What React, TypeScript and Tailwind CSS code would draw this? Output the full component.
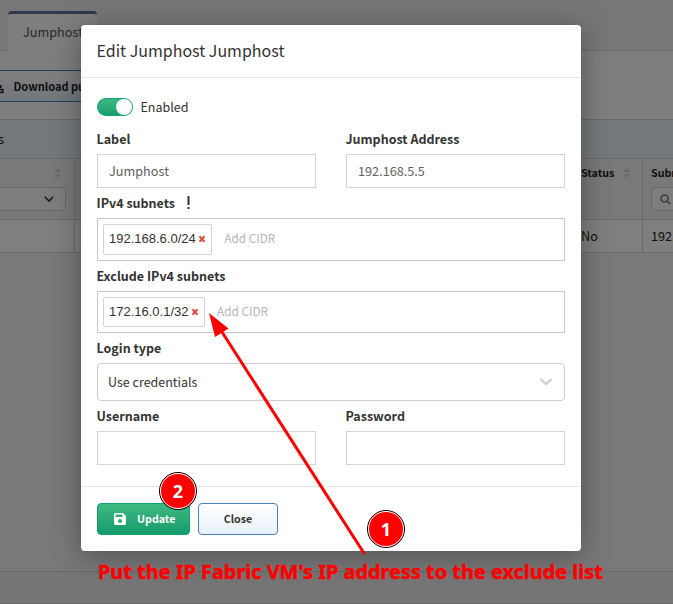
import React from "react";

const sans = "font-['Noto_Sans_CJK_SC','Liberation_Sans',sans-serif]";

function FieldLabel({ children, className = "" }: { children: React.ReactNode; className?: string }) {
  return <div className={`flex h-[30px] items-center whitespace-nowrap text-[12.5px] font-bold text-[#333] ${className}`}>{children}</div>;
}

function TextField({ label, value = "" }: { label: string; value?: string }) {
  return (
    <div className="w-[219px]">
      <FieldLabel className="-ml-[0.5px]">{label}</FieldLabel>
      <div className="flex h-[34px] items-center border border-[#d0d4df] px-[11px] text-[12.7px] text-[#606060]">{value}</div>
    </div>
  );
}

function SubnetBox({ value, className, tagClass = "" }: { value: string; className: string; tagClass?: string }) {
  return (
    <div className={`flex items-start border border-[#c8c8c8] px-[5px] pt-[5px] ${className}`}>
      <div className={`flex h-full items-center rounded-[2px] border border-[#d4d4d4] pr-[6px] pl-[5px] font-['Liberation_Sans',sans-serif] text-[13px] text-[#333] ${tagClass}`}>
        <span>{value}</span>
        <svg className="ml-[3px]" width="6" height="8" viewBox="0 0 6 8">
          <path d="M.5 1.200 5.500 6.800M5.500 1.200.5 6.800" stroke="#dd4b39" strokeWidth="2" />
        </svg>
      </div>
      <span className="ml-[12.5px] flex h-[28px] items-center text-[11.8px] text-[#b5b5b5]">Add CIDR</span>
    </div>
  );
}

function SortIcon() {
  return (
    <svg width="8" height="10" viewBox="0 0 8 10" fill="#d4d4d4">
      <path d="M4 0 7.500 4H.5zM4 10 .5 6h7z" />
    </svg>
  );
}

function Step({ n, className }: { n: number; className: string }) {
  return (
    <div className={`absolute flex size-[38px] items-center justify-center rounded-full border-[1.500px] border-black bg-[#f00] ${className}`}>
      <div className="flex size-full items-center justify-center rounded-full border border-white bg-[#f00] font-['Open_Sans',sans-serif] text-[18px] font-bold text-white">{n}</div>
    </div>
  );
}

function Background() {
  return (
    <div className="flex h-full w-full flex-col bg-[#f3f3f3] text-[#222]">
      <div className="flex h-[51px] items-end border-b border-[#dcdcdc] bg-[#eeeff1] pl-[8px]">
        <div className="-mb-px flex h-[40px] w-[89px] items-center rounded-t-[4px] border-t-[3px] border-[#5c779d] bg-[#fcfcfc] pb-[2px] pl-[15px] text-[12.7px] text-[#555]">Jumphost</div>
      </div>
      <div className="flex h-[68px] items-center bg-[#fcfcfc] pt-px">
        <div className="flex h-[32px] w-[140px] items-center border-y border-[#4a7dbb] bg-linear-to-b from-white to-[#e4effb] pt-[2px] text-[11px] font-bold whitespace-nowrap">
          <svg className="mr-[9.500px] shrink-0" width="4" height="14" viewBox="0 0 4 14">
            <path d="M0 5h1.500v3H0z" fill="#222" />
            <path d="M0 9.500h2.800v3H0" fill="none" stroke="#222" strokeWidth="1.500" />
          </svg>
          Download public key
        </div>
      </div>
      <div className="flex h-[40px] items-center border-y border-[#d2d2d2] bg-[#e6f0f8] text-[13px]">
        <span className="-ml-[2px]">s</span>
      </div>
      <div className="flex h-[61px] justify-between border-b border-[#d2d2d2] bg-[#f3f3f3]">
        <div className="flex w-[75px] flex-col items-end border-r border-[#d2d2d2] pt-[9px] pr-[8px]">
          <div className="pr-[4px]"><SortIcon /></div>
          <div className="mt-[9px] flex h-[24px] w-[78px] shrink-0 items-center justify-end rounded-[4px] border border-[#d0d0d0] bg-[#fafafa] pr-[11px]">
            <svg width="10" height="7" viewBox="0 0 10 7" fill="none" stroke="#333" strokeWidth="1.600"><path d="m.8.8 4.200 4.200L9.200.8" /></svg>
          </div>
        </div>
        <div className="flex w-[92px]">
          <div className="flex h-[28px] w-[61px] items-center text-[10.700px] font-bold">
            Status<span className="ml-[9px]"><SortIcon /></span>
          </div>
          <div className="w-[31px] overflow-hidden border-l border-[#d2d2d2] pl-[8px]">
            <div className="flex h-[28px] items-center text-[10.700px] font-bold">Subn</div>
            <div className="flex h-[24px] w-[60px] items-center rounded-[4px] border border-[#d0d0d0] bg-[#fafafa] pl-[8px]">
              <svg width="11" height="11" viewBox="0 0 11 11" fill="none" stroke="#777" strokeWidth="1.600"><circle cx="4.500" cy="4.500" r="3.500" /><path d="m7 7 3.300 3.300" /></svg>
            </div>
          </div>
        </div>
      </div>
      <div className="flex h-[33px] justify-between border-b border-[#d2d2d2] bg-white text-[12.700px]">
        <div className="w-[75px] border-r border-[#d2d2d2]" />
        <div className="flex w-[92px] items-center">
          <span className="w-[61px]">No</span>
          <span className="flex h-full w-[31px] items-center overflow-hidden border-l border-[#d2d2d2] pl-[8px]">192.</span>
        </div>
      </div>
      <div className="h-[318px]" />
      <div className="h-[33px] border-y border-[#d2d2d2] bg-[#ececec]" />
    </div>
  );
}

export default function App() {
  return (
    <div className={`relative h-[604px] w-[673px] overflow-hidden ${sans}`}>
      <Background />
      <div className="absolute inset-0 bg-black/50 px-[81px] pt-[25px]">
        <div className="flex h-[526px] w-[500px] flex-col rounded-[4px] bg-white shadow-[0_5px_30px_rgba(0,0,0,0.35)]">
          <div className="flex h-[53px] items-center border-b border-[#e5e6e8] px-[16px] pb-[2px] text-[16px] text-[#333]">
            <span className="-ml-[0.500px]">Edit Jumphost Jumphost</span>
          </div>
          <div className="flex h-[408px] flex-col px-[16px] pt-[20px]">
            <div className="flex h-[18px] items-center text-[12.5px] text-[#333]">
              <div className="mr-[7.500px] flex h-[18px] w-[36px] justify-end rounded-full border border-[#14a06e] bg-linear-to-b from-[#3db882] to-[#14a06e]">
                <div className="size-[16px] rounded-full bg-white" />
              </div>
              Enabled
            </div>
            <div className="mt-[8px] flex justify-between">
              <TextField label="Label" value="Jumphost" />
              <TextField label="Jumphost Address" value="192.168.5.5" />
            </div>
            <FieldLabel className="-ml-[0.5px]">
              IPv4 subnets
              <svg className="ml-[12px]" width="3" height="14" viewBox="0 0 3 14" fill="#333"><path d="M.5 0h2v9h-2zM.5 11h2v2h-2z" /></svg>
            </FieldLabel>
            <SubnetBox value="192.168.6.0/24" className="h-[43px] pb-[5px]" tagClass="pb-[2px]" />
            <FieldLabel className="-ml-[0.5px]">Exclude IPv4 subnets</FieldLabel>
            <SubnetBox value="172.16.0.1/32" className="h-[42px] pb-[5px]" />
            <FieldLabel className="-ml-[0.5px]">Login type</FieldLabel>
            <div className="flex h-[38px] items-center justify-between rounded-[4px] border border-[#ccc] pr-[12px] pl-[10px] text-[12.5px] text-[#333]">
              Use credentials
              <svg width="12" height="8" viewBox="0 0 12 8" fill="none" stroke="#ccc" strokeWidth="2.300" strokeLinecap="round"><path d="m1.300 1.800 4.700 4.200 4.700-4.200" /></svg>
            </div>
            <div className="flex justify-between">
              <TextField label="Username" />
              <TextField label="Password" />
            </div>
          </div>
          <div className="flex flex-1 items-start gap-[8px] border-t border-[#e5e6e8] px-[16px] pt-[16px] text-[10.700px] font-bold">
            <div className="flex h-[32px] w-[93px] items-center rounded-[4px] border border-[#14a06e] bg-linear-to-b from-[#3db882] to-[#109c6b] pl-[16px] text-white">
              <svg className="mr-[11px]" width="12" height="12" viewBox="0 0 12 12" fill="white" fillRule="evenodd"><path d="M1.500 0H9l3 3v7.500a1.500 1.500 0 0 1-1.500 1.500h-9A1.500 1.500 0 0 1 0 10.500v-9A1.500 1.500 0 0 1 1.500 0zM1.500 1.500v2.500h7v-2.500zM6 6a2 2 0 1 0 0 4 2 2 0 0 0 0-4z" /></svg>
              <span className="pt-px">Update</span>
            </div>
            <div className="flex h-[32px] w-[80px] items-center justify-center rounded-[4px] border border-[#4a7dbb] bg-linear-to-b from-white to-[#e8f1fb] pt-px text-[#333]">Close</div>
          </div>
        </div>
      </div>
      <svg className="pointer-events-none absolute inset-0" width="673" height="604" viewBox="0 0 673 604">
        <path d="M222 332 364.500 554" stroke="#f00" strokeWidth="3" />
        <path d="m209 313 19.500 15.500-13.500 8.500z" fill="#f00" />
      </svg>
      <Step n={2} className="top-[472px] left-[159px]" />
      <Step n={1} className="top-[510px] left-[367px]" />
      <div className="absolute top-[558px] left-[98px] whitespace-nowrap font-['Noto_Sans',sans-serif] text-[20px] leading-[28px] font-bold tracking-[-0.050px] text-[#f00] [-webkit-text-stroke:0.500px_#f00]">Put the IP Fabric VM's IP address to the exclude list</div>
    </div>
  );
}
